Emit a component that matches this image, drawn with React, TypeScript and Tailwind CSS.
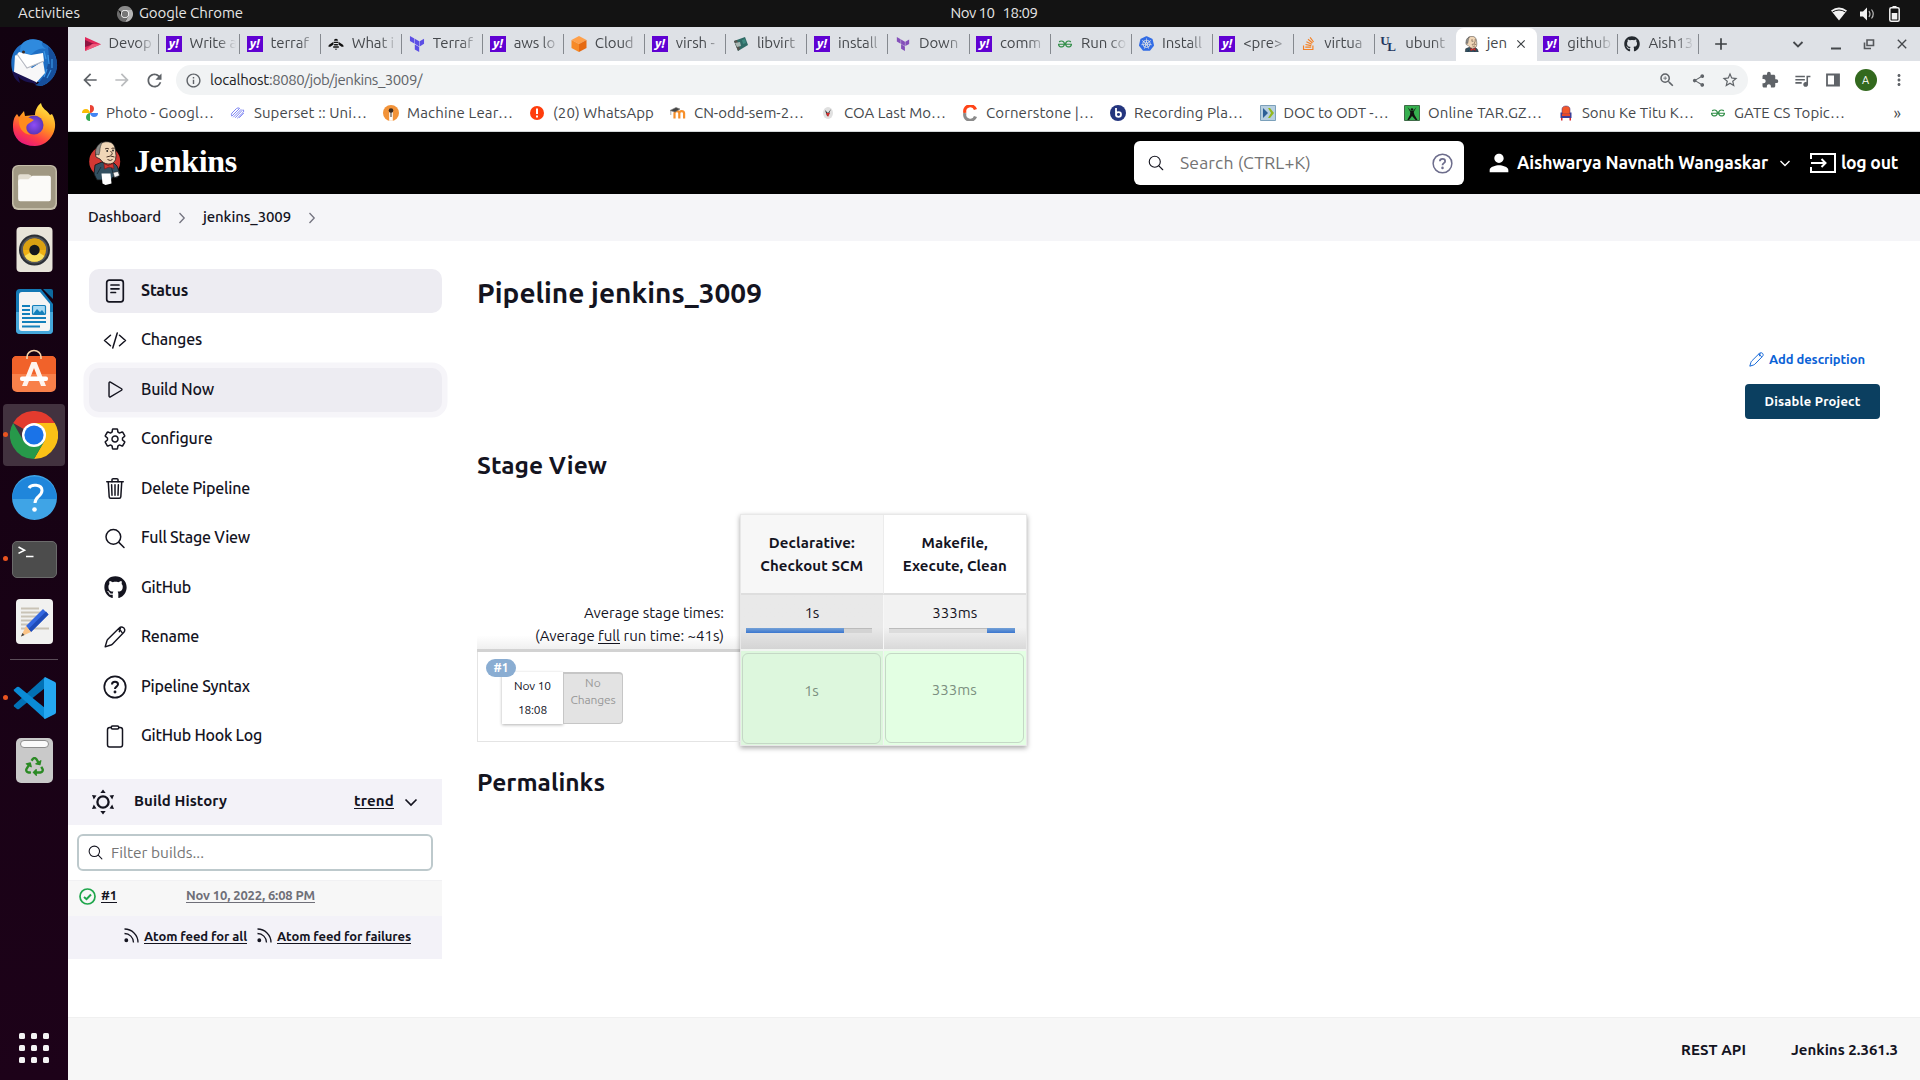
import React, { useLayoutEffect, useRef, useState } from "react";
import { MdArrowBack, MdArrowForward, MdRefresh, MdInfoOutline, MdZoomIn, MdShare, MdStarBorder, MdExtension, MdQueueMusic, MdMoreVert, MdPerson, MdClose, MdAdd } from "react-icons/md";
import { SiTerraform, SiKubernetes, SiGeeksforgeeks } from "react-icons/si";
import { FaStackOverflow, FaGithub, FaRecycle } from "react-icons/fa";
import { IoCodeSlashOutline, IoPlayOutline, IoSettingsOutline, IoTrashOutline, IoSearchOutline, IoClipboardOutline } from "react-icons/io5";

/* Text that spreads its letters to span exactly w pixels. */
function Fit({ w, className = "", children }: { w: number; className?: string; children: string }) {
  const ref = useRef<HTMLSpanElement>(null);
  const [ls, setLs] = useState(0);
  useLayoutEffect(() => {
    const el = ref.current;
    if (el) setLs((w - el.getBoundingClientRect().width) / children.length);
  }, []);
  return (
    <span ref={ref} className={"inline-block shrink-0 whitespace-pre " + className} style={{ letterSpacing: ls }}>
      {children}
    </span>
  );
}

/* ---------- favicons ---------- */
const Yahoo = () => (
  <div className="w-4 h-4 bg-[#6001d2] text-white text-[12px] leading-[15px] font-extrabold italic text-center">y!</div>
);
const Play = () => (
  <svg width="16" height="16" viewBox="0 0 16 16"><path d="M0 1L16 8.2 0 15z" fill="#e0285a" /><path d="M0 4l9 4-9 3z" fill="#8e1440" /><path d="M0 15l7-7 9 .2z" fill="#ee5a7c" /></svg>
);
const Bee = () => (
  <svg width="17" height="16" viewBox="0 0 17 16" fill="#111"><path d="M5.500 6L1.500 8.500Q.5 9.200.5 10.500V11h2l3.500-2.500zM11.500 6l4 2.500q1 .7 1 2V11h-2L11 8.500z" /><path d="M6.500 3.500Q8.500 1.500 10.500 3.500V4.500h-4zM6 5.500h5V7H6zM6.500 8h4v1.500h-4zM5.500 10.500h6V12h-6zM7 13h3l-1.500 1.500z" /></svg>
);
const Cube = () => (
  <svg width="16" height="16" viewBox="0 0 16 16"><path d="M8 0l7.500 4L8 8 .5 4z" fill="#ffa04a" /><path d="M.5 4L8 8v8L.5 12z" fill="#f68a28" /><path d="M15.500 4L8 8v8l7.500-4z" fill="#e66a12" /></svg>
);
const Libvirt = () => (
  <svg width="16" height="16" viewBox="0 0 16 16"><path d="M1 5l11-4 3 8-10 6z" fill="#2f6b66" /><path d="M1 5l3-1 3 9-2 2z" fill="#56524d" /><path d="M2 7l5-1 1 4-4 1z" fill="#a9b8b4" /><path d="M9 4l3-1 1 4-3 1z" fill="#3f8a80" /></svg>
);
const Ul = () => (
  <div className="relative w-4 h-4 font-bold text-[#23375f] font-['Liberation_Serif',serif]">
    <span className="absolute -left-px -top-px text-[13px] leading-[12px]">U</span>
    <span className="absolute left-[6px] top-[5px] text-[13px] leading-[12px]">L</span>
  </div>
);
const Butler = ({ className = "", head = false }: { className?: string; head?: boolean }) => (
  <svg className={className} viewBox={head ? "1 0 30 30" : "0 0 32 44"}>
    {!head && <ellipse cx="15.700" cy="20.500" rx="15.500" ry="15.500" fill="#d33833" />}
    <path d="M6 24l7-3 6 4 6-3 3 3 3 8-3 4-4-1-2 3-14 0-3-6z" fill="#335061" stroke="#111" strokeWidth=".8" />
    <path d="M8 33l4-7M24 32l-2-7" stroke="#16252f" strokeWidth=".8" />
    <path d="M8 9C9 3 13 .7 18 .7c5 0 8 3 8.500 9l.5 5-.5 4c-1 3-4 4.500-7.500 4.300-3-.2-6-2-8-5l-4-2q-1-2 0-4z" fill="#f0d6b7" stroke="#222" strokeWidth=".8" />
    <path d="M7.200 14C5 10 8 3 13.500 1.300 11.500 4 11 7 10.800 10l-.8 4-1.800-.5z" fill="#8d8c88" stroke="#222" strokeWidth=".5" />
    <circle cx="18.200" cy="10" r=".9" fill="#222" /><circle cx="24" cy="9.500" r=".9" fill="#222" />
    <path d="M16 8q2-1.500 4 0M22.500 7.500q1.500-1 3 0M21.500 10q3.500 3.500 0 4.200M17.500 16q4-2 8 0M18.500 18.500q3 2 5 0" fill="none" stroke="#4a3428" strokeWidth="1" />
    <path d="M15 22.500l4 2 5-2 1 5-5-1.500-4.500 2z" fill="#d33833" stroke="#7a1513" strokeWidth=".6" />
    <path d="M12.500 32.500h9l1 10-6 1.500-3-1.500z" fill="#fff" /><path d="M24 31.500l5-1 1.500 4-5 2z" fill="#f4f4f4" stroke="#111" strokeWidth=".5" />
  </svg>
);
const Pinwheel = () => (
  <svg width="16" height="16" viewBox="0 0 16 16"><path d="M8 8V0a4 4 0 014 4c0 2-2 4-4 4z" fill="#ea4335" /><path d="M8 8h8a4 4 0 01-4 4c-2 0-4-2-4-4z" fill="#4285f4" /><path d="M8 8v8a4 4 0 01-4-4c0-2 2-4 4-4z" fill="#34a853" /><path d="M8 8H0a4 4 0 014-4c2 0 4 2 4 4z" fill="#fbbc04" /></svg>
);
const Superset = () => (
  <svg width="16" height="16" viewBox="0 0 16 16" fill="none" stroke="#7e86f3" strokeWidth="1" strokeLinecap="round"><path d="M1.500 10.500Q1 9 2 8l4.500-4.500Q8 2.500 9 3M3.500 12L11 4.500M5.500 12.500l7-7.500M2 11l7.500-7.500M7.500 13l5.500-5.500Q14.500 6 13.500 5M9.500 12.500l4-4.200" /></svg>
);
const Machine = () => (
  <svg width="16" height="16" viewBox="0 0 16 16"><circle cx="8" cy="8" r="8" fill="#f29339" /><path d="M6.200 15.800V7h3.600v8.800z" fill="#fff" /><circle cx="8" cy="5.500" r="2.300" fill="#3a2a20" /><path d="M7.500 7h1v5h-1z" fill="#3a2a20" /></svg>
);
const Alert = () => (
  <svg width="16" height="16" viewBox="0 0 16 16"><circle cx="8" cy="8" r="7" fill="#ff3d0c" /><path d="M7 3.500h2v5.500H7zM7 10.500h2v2H7z" fill="#fff" /></svg>
);
const Moodle = () => (
  <svg width="16" height="16" viewBox="0 0 16 16"><path d="M4.500 13.500V8.500a2.400 2.400 0 014.800 0v5M9.300 13.500V8.500a2.400 2.400 0 014.800 0v5" fill="none" stroke="#f7902b" strokeWidth="2.200" /><path d="M0 5.500l6-3 4 1.500-5 3zM.8 6v4" fill="#444" stroke="#777" strokeWidth=".6" /></svg>
);
const Coa = () => (
  <svg width="16" height="16" viewBox="0 0 16 16"><ellipse cx="8" cy="8" rx="5" ry="6" fill="#e0e0e0" /><path d="M5 5l2 6 1 0 3-7-3 4z" fill="#333" /><path d="M6 8l2 4 2-4z" fill="#d22b2b" /></svg>
);
const Corner = () => (
  <svg width="16" height="16" viewBox="0 0 16 16" fill="none" strokeWidth="3.200"><path d="M13.500 4.500A5.400 5.400 0 003 8" stroke="#ff4417" /><path d="M3 8a5.400 5.400 0 0010.500 3.500" stroke="#8b8b8b" /></svg>
);
const Bbb = () => (
  <svg width="16" height="16" viewBox="0 0 16 16"><circle cx="8" cy="8" r="8" fill="#24357e" /><path d="M6 3v7.500M6 9.500a2.500 2.300 0 105-.0 2.500 2.300 0 10-5 0" fill="none" stroke="#fff" strokeWidth="1.800" /></svg>
);
const Doc = () => (
  <svg width="16" height="16" viewBox="0 0 16 16"><path d="M.5.5h15v15H.500z" fill="#b7cfe0" stroke="#7ba0ba" /><path d="M3 3v10l5-5z" fill="#2c5f96" /><path d="M8 3h2l4 5-4 5H8l3-5z" fill="#93b81e" /></svg>
);
const Tar = () => (
  <svg width="16" height="16" viewBox="0 0 16 16"><path d="M.5.5h15v15H.5z" fill="#36b04f" stroke="#3f6b48" /><path d="M3.500 2l3.500 4h2l3.500-4-2.800 5 .8 3 3 5h-1.800L8 11l-3 4H3.300L6 10l.3-3z" fill="#111" /><circle cx="8" cy="4.500" r="1.300" fill="#111" /></svg>
);
const Chair = () => (
  <svg width="16" height="16" viewBox="0 0 16 16"><path d="M4 9V4c0-4 8-4 8 0v5z" fill="#f2572b" stroke="#3a2a77" strokeWidth=".5" /><path d="M2.500 7.500h1.700V10h7.600V7.500h1.700V13h-11z" fill="#3b3c96" /><path d="M4 9h8v2H4z" fill="#e8472b" /><path d="M3 13h1.500v2.500H3zM11.500 13H13v2.500h-1.500z" fill="#d8262c" /></svg>
);

const tabs: { icon: React.ReactNode; t: string }[] = [
  { icon: <Play />, t: "Devop" },
  { icon: <Yahoo />, t: "Write a" },
  { icon: <Yahoo />, t: "terraf" },
  { icon: <Bee />, t: "What i" },
  { icon: <SiTerraform size={16} color="#5c4ee5" />, t: "Terraf" },
  { icon: <Yahoo />, t: "aws lo" },
  { icon: <Cube />, t: "Cloud" },
  { icon: <Yahoo />, t: "virsh -" },
  { icon: <Libvirt />, t: "libvirt" },
  { icon: <Yahoo />, t: "install" },
  { icon: <SiTerraform size={14} color="#844fba" />, t: "Down" },
  { icon: <Yahoo />, t: "comm" },
  { icon: <SiGeeksforgeeks size={14} color="#2f8d46" />, t: "Run co" },
  { icon: <SiKubernetes size={15} color="#326ce5" />, t: "Install" },
  { icon: <Yahoo />, t: "<pre>" },
  { icon: <FaStackOverflow size={15} color="#f48024" />, t: "virtua" },
  { icon: <Ul />, t: "ubunt" },
  { icon: <Butler className="w-4 h-4" head />, t: "jen" },
  { icon: <Yahoo />, t: "github" },
  { icon: <FaGithub size={16} color="#24292f" />, t: "Aish13" },
];

function TabStrip() {
  return (
    <div className="h-[34px] bg-[#dee1e6] flex pl-[10px] text-[15px] text-[#45484c]">
      {tabs.map((tab, i) =>
        i === 17 ? (
          <div key={i} className="w-[81.05px] shrink-0 mt-px bg-white rounded-t-lg flex items-center pl-[7px] pb-[2px]">
            <div className="w-4 flex justify-center">{tab.icon}</div>
            <Fit w={20} className="ml-2">jen</Fit>
            <MdClose size={14} className="ml-[7px]" color="#3c4043" />
          </div>
        ) : (
          <div key={i} className="w-[81.05px] shrink-0 flex items-center pl-[6.5px] pb-px">
            <div className="w-4 flex justify-center shrink-0">{tab.icon}</div>
            <div className="ml-2 w-[46px] overflow-hidden whitespace-nowrap tracking-[-0.1px] [mask-image:linear-gradient(to_right,#000_60%,transparent)]">{tab.t}</div>
            <div className={i === 16 ? "hidden" : "ml-auto w-px h-5 bg-[#85898f]"} />
          </div>
        )
      )}
      <div className="w-[44px] flex items-center justify-center pb-px"><MdAdd size={20} color="#3c4043" /></div>
      <div className="ml-auto flex items-center pr-[10px] gap-[17px]">
        <svg width="16" height="16" viewBox="0 0 16 16" fill="none" stroke="#45484c" strokeWidth="1.800"><path d="M3.500 6L8 10.500 12.500 6" /></svg>
        <svg className="ml-[5px]" width="16" height="16" viewBox="0 0 16 16"><path d="M3 11.500h10v2H3z" fill="#45484c" /></svg>
        <svg width="16" height="16" viewBox="0 0 16 16" fill="none" stroke="#55585c" strokeWidth="1.600"><path d="M6 4h6.500v5.500H6zM3.500 6.500v6h6.500" /></svg>
        <MdClose size={16} color="#45484c" />
      </div>
    </div>
  );
}

function Toolbar() {
  const c = "#5f6368";
  return (
    <div className="h-9 bg-white flex items-center pt-[2px] shrink-0">
      <div className="w-[108px] flex items-center pl-3 gap-3 shrink-0">
        <MdArrowBack size={20} color={c} /><MdArrowForward size={20} color="#babcbe" /><MdRefresh size={21} color={c} />
      </div>
      <div className="w-[1572px] h-[30px] rounded-full bg-[#f1f3f4] flex items-center pl-[9px] pr-[9px] shrink-0">
        <MdInfoOutline size={17} color={c} />
        <div className="ml-[8px] text-[15px] flex">
          <Fit w={59} className="text-[#202124]">localhost</Fit><Fit w={153} className="text-[#5f6368]">:8080/job/jenkins_3009/</Fit>
        </div>
        <div className="ml-auto flex gap-[15px] items-center"><MdZoomIn size={18} color={c} /><MdShare size={15} color={c} /><MdStarBorder size={18} color={c} /></div>
      </div>
      <div className="flex items-center ml-[13px] gap-[13.5px]">
        <MdExtension size={18} color={c} />
        <MdQueueMusic size={19} color={c} />
        <svg width="16" height="16" viewBox="0 0 16 16"><path d="M2 2.500h12v11H2z" fill="none" stroke={c} strokeWidth="1.800" /><path d="M9 2h5v12H9z" fill={c} /></svg>
        <div className="w-[22px] h-[22px] rounded-full bg-[#33691e] text-white text-[11px] leading-[22px] text-center">A</div>
        <MdMoreVert size={18} color={c} />
      </div>
    </div>
  );
}

const marks: { icon: React.ReactNode; t: string; w: number; cls: string }[] = [
  { icon: <Pinwheel />, t: "Photo - Googl…", w: 108, cls: "w-[148px]" },
  { icon: <Superset />, t: "Superset :: Uni…", w: 113, cls: "w-[153px]" },
  { icon: <Machine />, t: "Machine Lear…", w: 106, cls: "w-[146px]" },
  { icon: <Alert />, t: "(20) WhatsApp", w: 101, cls: "w-[141px]" },
  { icon: <Moodle />, t: "CN-odd-sem-2…", w: 110, cls: "w-[150px]" },
  { icon: <Coa />, t: "COA Last Mo…", w: 102, cls: "w-[142px]" },
  { icon: <Corner />, t: "Cornerstone |…", w: 108, cls: "w-[148px]" },
  { icon: <Bbb />, t: "Recording Pla…", w: 109, cls: "w-[149.500px]" },
  { icon: <Doc />, t: "DOC to ODT -…", w: 105, cls: "w-[144.500px]" },
  { icon: <Tar />, t: "Online TAR.GZ…", w: 114, cls: "w-[154px]" },
  { icon: <Chair />, t: "Sonu Ke Titu K…", w: 112, cls: "w-[152px]" },
  { icon: <SiGeeksforgeeks size={14} color="#2f8d46" />, t: "GATE CS Topic…", w: 111, cls: "w-[150px]" },
];

function Bookmarks() {
  return (
    <div className="h-[35px] shrink-0 bg-white border-b border-[#d4d8d9] flex items-center pl-[14px] pb-[2px] text-[15px] text-[#45484c]">
      {marks.map((m) => (
        <div key={m.t} className={"flex items-center shrink-0 " + m.cls}>
          <div className="w-4 mr-2 flex justify-center">{m.icon}</div>
          <Fit w={m.w}>{m.t}</Fit>
        </div>
      ))}
      <div className="ml-auto pr-[19px] text-[16px]">»</div>
    </div>
  );
}

/* ---------- dock ---------- */
const Thunderbird = () => (
  <svg width="48" height="48" viewBox="0 0 48 48">
    <path d="M3 34C-1 22 2 10 12 5c4-5 14-6 20-2 8 3 15 12 15 22 0 12-8 20-16 22l-6-1 6-2z" fill="#1f6fc4" />
    <path d="M12 5C16-1 27-1 33 3c-2 1-2 3 3 7-6-2-12 2-15 6-5-1-8-4-11-2 0-4 0-6 2-9z" fill="#2f8ade" />
    <path d="M38 8c8 5 11 17 8 25-3 7-8 11-14 14l-6-1c8-6 15-20 12-38z" fill="#164f9c" />
    <path d="M34 12l2 8M38 16l1 9M42 20l0 9M37 30l-3 8M41 31l-4 8" stroke="#3a97e6" strokeWidth="1.200" />
    <path d="M5 16l17 13 11-7 2 12-9 10C18 42 10 38 4 33z" fill="#f7f7f8" /><path d="M9 13l-4 5 2 2 10 9 17-7-1-8-12 2z" fill="#fff" /><path d="M7 15l10 14 17-7" fill="none" stroke="#b6b9c2" strokeWidth="1.200" />
    <path d="M2 32l24 11 0 3-3-2C14 43 10 40 8 37l2 7C5 41 3 36 2 32z" fill="#1a1250" /><circle cx="13.500" cy="13" r="1.500" fill="#3b2a22" />
  </svg>
);
const Firefox = () => (
  <svg width="44" height="44" viewBox="0 0 44 44">
    <defs>
      <linearGradient id="ff" x1=".8" y1="0" x2=".3" y2="1"><stop offset="0" stopColor="#fff04a" /><stop offset=".45" stopColor="#ff9a1f" /><stop offset=".75" stopColor="#ff3f45" /><stop offset="1" stopColor="#e5177d" /></linearGradient>
      <radialGradient id="fp"><stop offset="0" stopColor="#8f4cf6" /><stop offset="1" stopColor="#5b36b8" /></radialGradient>
    </defs>
    <path d="M5 11l2 3 5-6 1 5 10-1c0-5 3-10 6-12 1 6 6 7 9 12l2-1c4 7 4 14 1 20-4 8-11 12-18 12C9 43 1 35 1 24c0-6 1-10 4-13z" fill="url(#ff)" />
    <circle cx="22" cy="22" r="9.500" fill="url(#fp)" /><path d="M7 15c5-3 9-1 15 2l-6 4c-3 2-2 8 3 11-9-1-13-8-12-17z" fill="#ff8c1c" />
  </svg>
);
const Files = () => (
  <svg width="45" height="45" viewBox="0 0 44 44"><rect width="44" height="44" rx="6" fill="#c4bda9" /><rect x="1.500" y="1" width="41" height="41" rx="5" fill="#a09883" /><path d="M6 14v-3q0-2 2-2h8q2 0 4 2.500h-1V20H6z" fill="#e3ded2" /><path d="M6 16q0-2 2-2h8l4-3.500h16q2 0 2 2V33q0 2.500-2 2.500H8Q6 35.500 6 33z" fill="#fbfaf8" /></svg>
);
const Rhythm = () => (
  <svg width="37" height="45" viewBox="0 0 36 45"><rect width="36" height="45" rx="4" fill="#e8e4da" /><circle cx="18" cy="23" r="15.500" fill="#2b2f36" /><circle cx="18" cy="23" r="13.500" fill="#54565a" /><circle cx="18" cy="23" r="11.500" fill="#efb013" /><path d="M6.500 23a11.500 11.500 0 0123 0z" fill="#d9a012" /><path d="M8 29a11.500 11.500 0 0020 0l-10-6z" fill="#fbe05c" /><circle cx="18" cy="23" r="5.200" fill="#17191c" /></svg>
);
const Writer = () => (
  <svg width="37" height="45" viewBox="0 0 37 45"><path d="M4 0h21l12 15v26q0 4-4 4H4q-4 0-4-4V4q0-4 4-4z" fill="#1479b5" /><path d="M0 23h37v18q0 4-4 4H4q-4 0-4-4z" fill="#45a7da" /><path d="M27 0h8q2 0 2 2v8q-7-7-10-10z" fill="#0d6a9f" /><path d="M6 3h18l10 12v24q0 3-2 3H6q-3 0-3-3V6q0-3 3-3z" fill="#f5f5f4" /><path d="M6 17h8M6 21h8M6 25h8M6 29h24M6 33h24M6 37.500h18" stroke="#1380bb" strokeWidth="1.800" /><rect x="16.500" y="16.500" width="13" height="9" rx="1" fill="#a8daf3" stroke="#1380bb" strokeWidth="1.200" /><path d="M17 25l4-5 3 3 2-2 3 4z" fill="#1380bb" /></svg>
);
const Software = () => (
  <svg className="-mt-[4px]" width="46" height="44" viewBox="0 0 46 44"><rect x="1" y="7" width="44" height="36" rx="5" fill="#f8804a" /><path d="M1 25V12q0-5 5-5h34q5 0 5 5v13z" fill="#f1622a" /><path d="M16 10V8a7 6.500 0 0114 0v2" fill="none" stroke="#f6d3a8" strokeWidth="1.600" /><path d="M20.500 13h5L35 37h-5l-7-18-7 18h-5z" fill="#fff4ee" /><rect x="9" y="27.500" width="28" height="4.500" rx="2" fill="#fff" /></svg>
);
const Chrome = ({ size, gray = false }: { size: number; gray?: boolean }) => (
  <svg width={size} height={size} viewBox="0 0 48 48">
    <path d="M24 24L3.200 12a24 24 0 0141.600 0z" fill={gray ? "#8a8a8a" : "#e33b2e"} /><path d="M24 12h20.800A24 24 0 0124 48l10.400-18z" fill={gray ? "#b4b4b4" : "#fbc116"} /><path d="M3.200 12A24 24 0 0024 48l10.400-18H13.600z" fill={gray ? "#6b6b6b" : "#27994a"} />
    <circle cx="24" cy="24" r="12" fill="#fff" /><circle cx="24" cy="24" r="9.600" fill={gray ? "#777" : "#1a73e8"} />
  </svg>
);
const Help = () => (
  <svg width="45" height="45" viewBox="0 0 45 45"><circle cx="22.500" cy="22.500" r="22.500" fill="#3fa4e6" /><path d="M0 24a22.500 22.500 0 1145 0z" fill="#1f86db" /><path d="M17 13c2-4 13-4 13 2.500 0 6-7 6-7 12.500" fill="none" stroke="#fff" strokeWidth="3" /><circle cx="22.500" cy="34.500" r="2.300" fill="#fff" /></svg>
);
const Terminal = () => (
  <div className="w-[45px] h-[37px] rounded-[5px] bg-[#4c4c4c] border border-[#6b6b6b]">
    <svg width="43" height="35" viewBox="0 0 43 35" fill="none" stroke="#fff" strokeWidth="1.600"><path d="M5.500 5l6 3.200-6 3.200M13 14.500h7.500" /></svg>
  </div>
);
const Editor = () => (
  <svg width="37" height="45" viewBox="0 0 37 45"><rect width="37" height="45" rx="4" fill="#f1f1f0" /><path d="M5 9.500h18M5 13.500h23M5 17.500h20M5 21.500h15M5 25.500h12M5 29.500h28" stroke="#c9c3b6" strokeWidth="1.800" /><path d="M10 27L27 10l5.500 5.500L15 33z" fill="#3367e0" /><path d="M12.500 30L30 12.500l2.500 3L15 33z" fill="#1f4cb8" /><path d="M10 27l5 6-10 4.500z" fill="#fac387" /><path d="M6.500 34l2 2L5 37.500z" fill="#444" /></svg>
);
const VsCode = () => (
  <svg width="43" height="42" viewBox="0 0 43 42"><path d="M1 28L32 0v11L6 32q-1 .5-2 0l-3-2.500q-.5-1 0-1.500z" fill="#0271b5" /><path d="M1 14L32 42V31L6 10q-1-.5-2 0L1 12.500q-.5 1 0 1.500z" fill="#0a8bd6" /><path d="M32 0l10 5q1 .5 1 2v28q0 1.500-1 2l-10 5q-1 0-1-2V2z" fill="#25a7f1" /></svg>
);
const Trash = () => (
  <div className="relative w-[37px] h-[45px] rounded-[5px] bg-[#c9c9c9] flex justify-center pt-[19px]">
    <div className="absolute top-[2px] left-[4px] w-[29px] h-[8px] rounded bg-[#fafafa] border border-[#8d8d8d]" />
    <FaRecycle size={19} color="#2b8a24" />
  </div>
);

const dockTop: { el: React.ReactNode; run?: boolean }[] = [
  { el: <Thunderbird /> }, { el: <Firefox /> }, { el: <Files /> }, { el: <Rhythm /> }, { el: <Writer /> }, { el: <Software /> },
  { el: <Chrome size={48} />, run: true }, { el: <Help /> }, { el: <Terminal />, run: true }, { el: <Editor /> },
];
const dockLow: { el: React.ReactNode; run?: boolean }[] = [{ el: <VsCode />, run: true }, { el: <Trash /> }];

function DockItem({ el, run, active }: { el: React.ReactNode; run?: boolean; active?: boolean }) {
  return (
    <div className="relative w-full h-[62px] shrink-0 px-[3px]">
      <div className={"w-full h-full rounded flex items-center justify-center " + (active ? "bg-[#42323f]" : "")}>{el}</div>
      {run && <div className="absolute left-[3px] top-[28px] w-[5px] h-[5px] rounded-full bg-[#e95420]" />}
    </div>
  );
}

function Dock() {
  return (
    <div className="w-[68px] shrink-0 bg-linear-to-b from-[#120210] to-[#1d0219] flex flex-col items-center pt-[5px]">
      {dockTop.map((d, i) => <DockItem key={i} el={d.el} run={d.run} active={i === 6} />)}
      <div className="h-[15px] flex items-center"><div className="w-12 h-px bg-[#5b4d59]" /></div>
      {dockLow.map((d, i) => <DockItem key={i} el={d.el} run={d.run} />)}
      <div className="mt-auto mb-[17px] grid grid-cols-3 gap-[6px]">
        {Array.from({ length: 9 }, (_, i) => <div key={i} className="w-[6px] h-[6px] rounded-[1.5px] bg-[#f3f3f3]" />)}
      </div>
    </div>
  );
}

/* ---------- Jenkins ---------- */
const Chevron = () => <svg width="8" height="12" viewBox="0 0 8 12" fill="none" stroke="#73737f" strokeWidth="1.300"><path d="M1.500 1L6.200 6l-4.700 5" /></svg>;
const Pencil = ({ size }: { size: number }) => (
  <svg width={size} height={size} viewBox="0 0 22 22" fill="none" stroke="currentColor" strokeWidth="1.400" strokeLinejoin="round"><path d="M1.200 20.800l1.600-5.600q.4-1.200 1.300-2.100L15 2.200q1.600-1.500 3.500-1 1.700.5 2.200 2.300.3 1.700-1 3L8.800 17.700q-.9.900-2 1.300zM14 3.200q2.800.8 4.700 4.300M16.500 1.700l-1.300 4.500" /></svg>
);
const Question = ({ size }: { size: number }) => (
  <svg width={size} height={size} viewBox="0 0 24 24" fill="none" stroke="currentColor" strokeWidth="1.700"><circle cx="12" cy="12" r="10.700" /><path d="M9 9.500c0-3.700 6-3.500 6-.2 0 2.300-3 2.300-3 4.700" strokeWidth="2" /><circle cx="12" cy="17" r=".6" fill="currentColor" /></svg>
);
const StatusIcon = () => (
  <svg width="20" height="24" viewBox="0 0 20 24" fill="none" stroke="currentColor" strokeWidth="1.700" strokeLinecap="round"><rect x="1.700" y="1.200" width="16.600" height="21.600" rx="2.500" /><path d="M6 6h8M6 9.800h8M6 13.500h4.500" /></svg>
);
const Feed = () => (
  <svg width="15" height="15" viewBox="0 0 15 15" fill="none" stroke="#14141f" strokeWidth="1.300"><path d="M.5 5.500A9 9 0 019.500 14.500M.5 1A13.500 13.500 0 0114 14.500" /><circle cx="2.300" cy="12.300" r="1.300" fill="#14141f" /></svg>
);

const side: { icon: React.ReactNode; t: string; w: number }[] = [
  { icon: <StatusIcon />, t: "Status", w: 47 },
  { icon: <IoCodeSlashOutline size={25} />, t: "Changes", w: 61 },
  { icon: <IoPlayOutline size={23} />, t: "Build Now", w: 73 },
  { icon: <IoSettingsOutline size={24} />, t: "Configure", w: 71 },
  { icon: <IoTrashOutline size={25} />, t: "Delete Pipeline", w: 109 },
  { icon: <IoSearchOutline size={25} />, t: "Full Stage View", w: 109 },
  { icon: <FaGithub size={23} />, t: "GitHub", w: 50 },
  { icon: <Pencil size={22} />, t: "Rename", w: 58 },
  { icon: <Question size={24} />, t: "Pipeline Syntax", w: 109 },
  { icon: <IoClipboardOutline size={25} />, t: "GitHub Hook Log", w: 121 },
];

function SidePanel() {
  return (
    <div className="w-[374px] shrink-0 pt-7 text-[#14141f]">
      <div className="pl-[21px] flex flex-col gap-[5.5px]">
        {side.map((s, i) => (
          <div
            key={s.t}
            className={
              "h-11 rounded-[10px] flex items-center pl-[14px] text-[16px] " +
              (i === 0 ? "bg-[#edecf2] font-bold" : i === 2 ? "bg-[#edecf2] font-medium shadow-[0_0_0_5.5px_#f6f5f9]" : "font-medium")
            }
          >
            <div className="w-6 mr-[14px] pb-px flex justify-center shrink-0">{s.icon}</div>
            <Fit w={s.w} className="pb-[3px]">{s.t}</Fit>
          </div>
        ))}
      </div>
      <div className="mt-[20.5px] h-[46px] bg-[#f3f2f8] flex items-center pl-[22px] pr-[24px] font-bold text-[15px]">
        <svg width="26" height="26" viewBox="0 0 26 26" fill="#14141f"><circle cx="13" cy="13" r="5.600" fill="none" stroke="#14141f" strokeWidth="2.300" /><path d="M10.300 4L13 .4 15.700 4zM10.300 22L13 25.600 15.700 22zM2 6l4.500.4-2.700 4zM24 6l-4.500.4 2.700 4zM2 20l4.500-.4-2.700-4zM24 20l-4.500-.4 2.700-4z" /></svg>
        <Fit w={93} className="ml-[18px] pb-[2px]">Build History</Fit>
        <Fit w={40} className="ml-auto pb-[2px] underline underline-offset-2">trend</Fit>
        <svg className="ml-[10px]" width="14" height="14" viewBox="0 0 14 14" fill="none" stroke="#14141f" strokeWidth="1.700"><path d="M1.500 4.500L7 10 12.500 4.500" /></svg>
      </div>
      <div className="h-[55px] px-[9px] pt-[9px]">
        <div className="h-[37px] border-2 border-[#bdc9cc] rounded-md flex items-center pl-2">
          <IoSearchOutline size={17} />
          <Fit w={93} className="ml-[7px] text-[15.5px] text-[#757575]">Filter builds...</Fit>
        </div>
      </div>
      <div className="h-9 bg-[#f7f7f7] border-t border-[#f1f1f3] flex items-center pl-[11px] pb-[4px] font-bold text-[13px]">
        <svg width="17" height="17" viewBox="0 0 17 17" fill="none" stroke="#1ea64b" strokeWidth="1.700"><circle cx="8.500" cy="8.500" r="7.500" /><path d="M5 9l2.500 2.200L12 6.500" strokeWidth="2" /></svg>
        <Fit w={16} className="ml-[5px] pb-[2px] underline underline-offset-2">#1</Fit>
        <Fit w={129} className="ml-[69px] pb-[2px] text-[#6f6f78] underline underline-offset-2">Nov 10, 2022, 6:08 PM</Fit>
      </div>
      <div className="h-[43px] bg-[#f3f2f8] flex items-center pl-[56px] pb-[2px] font-bold text-[13px]">
        <div className="pb-[3px]"><Feed /></div>
        <Fit w={103} className="ml-[5px] underline underline-offset-2">Atom feed for all</Fit>
        <div className="ml-[10px] pb-[3px]"><Feed /></div>
        <Fit w={134} className="ml-[5px] underline underline-offset-2">Atom feed for failures</Fit>
      </div>
    </div>
  );
}

function StageView() {
  return (
    <div className="flex h-[232px] text-[15px] leading-[23px] text-[#14141f]">
      <div className="w-[263px] shrink-0 flex flex-col pt-[80px]">
        <div className="h-[58px] pt-[7px] pr-4 flex flex-col items-end border-b-[3px] border-[#d2d2d2] bg-linear-to-b from-[#fff] from-75% to-[#f0f0f0]">
          <Fit w={140}>Average stage times:</Fit>
          <div className="flex"><Fit w={63}>(Average </Fit><Fit w={22} className="underline underline-offset-2">full</Fit><Fit w={104}> run time: ~41s)</Fit></div>
        </div>
        <div className="h-[90px] border-l border-b border-[#e4e4e4] pl-[24px] pt-[20px] relative flex text-[12px]">
          <div className="w-[61px] h-[52px] bg-white shadow-[0_1px_3px_rgba(0,0,0,0.3)] text-center leading-6 pt-[2px] flex flex-col items-center">
            <Fit w={37}>Nov 10</Fit><Fit w={29}>18:08</Fit>
          </div>
          <div className="w-[60px] h-[52px] bg-[#e3e3e3] border border-[#c6c6c6] border-t-2 rounded-r text-[#999] leading-[17px] flex flex-col items-center">
            <Fit w={16}>No</Fit><Fit w={45}>Changes</Fit>
          </div>
          <div className="absolute left-[8px] top-[7px] w-[30px] h-[18px] rounded-full bg-[#8aadd2] text-white font-bold leading-[18px] text-center">#1</div>
        </div>
      </div>
      <div className="w-[287px] shrink-0 border border-[#e8e8e8] shadow-[0_2px_5px_rgba(0,0,0,0.35)] grid grid-cols-2 bg-white">
        <div className="h-[80px] bg-[#f7f7f7] border-r border-[#ececec] border-b-2 border-b-[#dedede] flex flex-col items-center pt-[16px] font-bold">
          <Fit w={86}>Declarative:</Fit><Fit w={103}>Checkout SCM</Fit>
        </div>
        <div className="h-[80px] border-b-2 border-b-[#dedede] flex flex-col items-center pt-[16px] font-bold">
          <Fit w={66}>Makefile,</Fit><Fit w={104}>Execute, Clean</Fit>
        </div>
        <div className="h-[54px] bg-linear-to-b from-[#e9e9e9] from-60% to-[#d4d4d4] border-r border-[#f7f7f7] pt-[6px] px-[5px] flex flex-col items-center">
          <Fit w={14}>1s</Fit>
          <div className="mt-[4px] w-[126px] mr-auto h-[5px] bg-[#d3d3d3] border-t border-[#bbb]"><div className="-mt-px w-[98px] h-[5px] bg-linear-to-b from-[#74a1d6] to-[#3a76cf]" /></div>
        </div>
        <div className="h-[54px] bg-linear-to-b from-[#f2f2f2] from-60% to-[#d9d9d9] pt-[6px] px-[5px] flex flex-col items-center">
          <Fit w={45}>333ms</Fit>
          <div className="mt-[4px] w-[126px] mr-auto h-[5px] bg-[#dcdcdc] border-t border-[#bbb]"><div className="-mt-px ml-auto w-[28px] h-[5px] bg-linear-to-b from-[#74a1d6] to-[#3a76cf]" /></div>
        </div>
        <div className="h-[96px] bg-[#ddf7dd] border-r border-t-2 border-[#f1f4f1] p-[2px] pl-px pb-px text-[#7c8f80]">
          <div className="h-full rounded-md border border-[#c5d8c6] flex items-center justify-center pb-[16px]"><Fit w={14}>1s</Fit></div>
        </div>
        <div className="h-[96px] bg-[#e3ffe3] border-t-2 border-[#f1f4f1] p-[2px] pl-px text-[#7c8f80]">
          <div className="h-full rounded-md border border-[#c5d8c6] flex items-center justify-center pb-[16px]"><Fit w={45}>333ms</Fit></div>
        </div>
      </div>
    </div>
  );
}

export default function App() {
  return (
    <div className="w-[1920px] h-[1080px] overflow-hidden flex flex-col bg-white font-['Ubuntu','Noto_Sans',sans-serif]">
      <div className="h-[27px] shrink-0 bg-[#131313] text-[#e6e6e6] text-[15px] grid grid-cols-3 items-center">
        <div className="flex items-center pl-[18px]">
          <Fit w={62}>Activities</Fit>
          <div className="ml-[37px] mr-[6px]"><Chrome size={16} gray /></div>
          <Fit w={104}>Google Chrome</Fit>
        </div>
        <div className="flex justify-center pl-[68px] pb-px gap-[8px]"><Fit w={44}>Nov 10</Fit><Fit w={35}>18:09</Fit></div>
        <div className="flex justify-end items-center pr-[20px] gap-[13px]">
          <svg width="16" height="14" viewBox="0 0 16 14"><path d="M0 3.500Q8-2.500 16 3.500L8 13.500z" fill="#f2f2f2" /><path d="M1.500 5Q8 1 14.500 5" fill="none" stroke="#131313" strokeWidth="1" /></svg>
          <svg width="16" height="14" viewBox="0 0 16 14"><path d="M0 4.500h3L7 .5v13L3 9.500H0z" fill="#f2f2f2" /><path d="M9 4q2 3 0 6M11.500 2.500q3.500 4.500 0 9" fill="none" stroke="#bbb" strokeWidth="1.200" /></svg>
          <svg width="11" height="16" viewBox="0 0 11 16"><path d="M3.500 0h4v2h-4z" fill="#f2f2f2" /><rect x=".8" y="1.800" width="9.400" height="13.400" rx="1.500" fill="none" stroke="#f2f2f2" strokeWidth="1.500" /><path d="M2.700 7h5.600v6.500H2.700z" fill="#f2f2f2" /></svg>
        </div>
      </div>
      <div className="flex-1 flex min-h-0">
        <Dock />
        <div className="w-[1852px] flex flex-col">
          <TabStrip />
          <Toolbar />
          <Bookmarks />
          <div className="h-[62px] shrink-0 bg-black text-white flex items-center pl-[21px] pr-[22px]">
            <Butler className="w-8 h-11" />
            <Fit w={103} className="ml-[13px] font-['Liberation_Serif',serif] font-bold text-[32px] leading-[36px] pb-[4px]">Jenkins</Fit>
            <div className="ml-auto w-[330px] h-11 bg-white rounded-md flex items-center pl-[13px] pr-[11px] text-[#14141f]">
              <IoSearchOutline size={18} />
              <Fit w={131} className="ml-[15px] text-[17.6px] text-[#737373]">Search (CTRL+K)</Fit>
              <div className="ml-auto text-[#6d6d8c]"><Question size={21} /></div>
            </div>
            <MdPerson size={28} className="ml-[21px]" />
            <Fit w={251} className="ml-[4px] text-[17.6px] font-bold">Aishwarya Navnath Wangaskar</Fit>
            <svg className="ml-[11px]" width="12" height="12" viewBox="0 0 12 12" fill="none" stroke="#fff" strokeWidth="1.400"><path d="M1.500 4L6 8.500 10.500 4" /></svg>
            <svg className="ml-[19px]" width="26" height="20" viewBox="0 0 26 20" fill="none" stroke="#fff" strokeWidth="2"><path d="M1 6V1h24v18H1v-5M1 10h14M11.500 6L15.500 10l-4 4" /></svg>
            <Fit w={57} className="ml-[5px] text-[17.6px] font-bold">log out</Fit>
          </div>
          <div className="h-[47px] shrink-0 bg-[#f5f5f8] flex items-center pl-[20px] text-[15px] font-medium text-[#14141f]">
            <Fit w={73}>Dashboard</Fit><div className="ml-[17px] mr-[17px]"><Chevron /></div><Fit w={88}>jenkins_3009</Fit><div className="ml-[17px]"><Chevron /></div>
          </div>
          <div className="h-[776px] shrink-0 flex">
            <SidePanel />
            <div className="flex-1 pl-[35px] pr-[40px] text-[#14141f]">
              <h1 className="mt-[30px] h-[44px] flex items-center text-[28px] font-bold"><Fit w={285}>Pipeline jenkins_3009</Fit></h1>
              <div className="mt-[32px] flex flex-col items-end text-[13px] font-bold">
                <div className="w-[135px] h-6 flex items-center pl-[4px] pt-px text-[#0b62d6]"><Pencil size={15} /><Fit w={96} className="ml-[5px]">Add description</Fit></div>
                <div className="mt-[13px] w-[135px] h-[35px] rounded bg-[#0b3f60] text-white flex items-center justify-center"><Fit w={96}>Disable Project</Fit></div>
              </div>
              <h2 className="mt-[28px] h-[36px] flex items-center text-[24.5px] font-bold"><Fit w={130}>Stage View</Fit></h2>
              <div className="mt-[30.5px]"><StageView /></div>
              <h2 className="mt-[19px] h-[36px] flex items-center text-[24.5px] font-bold"><Fit w={128}>Permalinks</Fit></h2>
            </div>
          </div>
          <div className="flex-1 bg-[#f7f7f7] border-t border-[#f0f0f0] flex items-center justify-end pr-[22px] gap-[45px] pt-[2px] font-bold text-[15px] text-[#14141f]">
            <Fit w={65}>REST API</Fit><Fit w={107}>Jenkins 2.361.3</Fit>
          </div>
        </div>
      </div>
    </div>
  );
}
